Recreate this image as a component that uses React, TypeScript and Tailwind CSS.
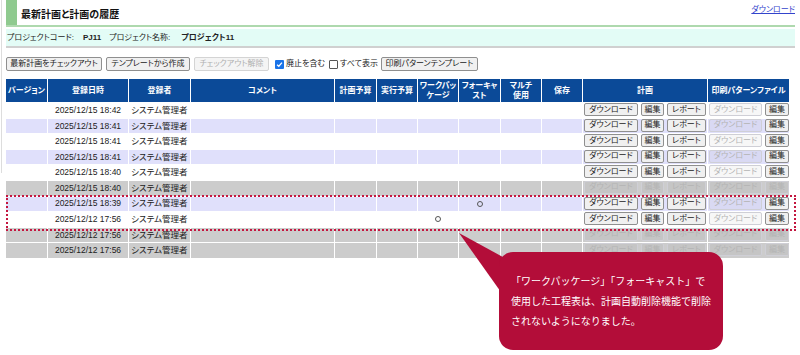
import React from "react";

type RowKind = "white" | "lav" | "gray";
interface Row {
  kind: RowKind;
  date: string;
  wp?: boolean;
  fc?: boolean;
}

const rows: Row[] = [
  { kind: "white", date: "2025/12/15 18:42" },
  { kind: "lav", date: "2025/12/15 18:41" },
  { kind: "white", date: "2025/12/15 18:41" },
  { kind: "lav", date: "2025/12/15 18:41" },
  { kind: "white", date: "2025/12/15 18:40" },
  { kind: "gray", date: "2025/12/15 18:40" },
  { kind: "lav", date: "2025/12/15 18:39", fc: true },
  { kind: "white", date: "2025/12/12 17:56", wp: true },
  { kind: "gray", date: "2025/12/12 17:56" },
  { kind: "gray", date: "2025/12/12 17:56" },
];

const cols =
  "grid grid-cols-[41px_80px_61px_143px_41px_40px_40px_41px_40px_40px_124px_81px] gap-x-[1px]";

function Btn({
  label,
  w,
  disabled,
}: {
  label: string;
  w: string;
  disabled?: boolean;
}) {
  return (
    <span
      className={
        "inline-flex items-center justify-center h-[13px] rounded-[2px] border text-[8px] leading-none " +
        w +
        (disabled
          ? " border-[#cfcfd6] bg-[rgba(0,0,0,0.03)] text-[#b4b4b4]"
          : " border-[#8f8f8f] bg-[#f0f0f0] text-[#222]")
      }
    >
      {label}
    </span>
  );
}

function TopBtn({
  label,
  w,
  disabled,
}: {
  label: string;
  w: string;
  disabled?: boolean;
}) {
  return (
    <span
      className={
        "inline-flex items-center justify-center h-[14px] rounded-[2px] border text-[8px] leading-none " +
        w +
        (disabled
          ? " border-[#d4d4d4] bg-[#f4f4f4] text-[#b0b0b0]"
          : " border-[#8f8f8f] bg-[#f0f0f0] text-[#222]")
      }
    >
      {label}
    </span>
  );
}

function Header() {
  const h = "bg-[#0b4a98] text-white font-bold text-[8px] leading-[10px] flex items-center justify-center text-center h-[23px]";
  return (
    <div className={cols}>
      <div className={h}>バージョン</div>
      <div className={h}>登録日時</div>
      <div className={h}>登録者</div>
      <div className={h}>コメント</div>
      <div className={h}>計画予算</div>
      <div className={h}>実行予算</div>
      <div className={h}>
        ワークパッ
        <br />
        ケージ
      </div>
      <div className={h}>
        フォーキャ
        <br />
        スト
      </div>
      <div className={h}>
        マルチ
        <br />
        使用
      </div>
      <div className={h}>保存</div>
      <div className={h}>計画</div>
      <div className={h}>印刷パターンファイル</div>
    </div>
  );
}

function Circle() {
  return (
    <span className="inline-block w-[6px] h-[6px] rounded-full border border-[#555]" />
  );
}

function BodyRow({ r }: { r: Row }) {
  const bg =
    r.kind === "white"
      ? "bg-white"
      : r.kind === "lav"
      ? "bg-[#e0e0fb]"
      : "bg-[#cccccc]";
  const c = "h-[14.6px] flex items-center text-[8.5px] text-[#222] " + bg;
  const dis = r.kind === "gray";
  return (
    <div className={cols + " mt-[1px]"}>
      <div className={c}></div>
      <div className={c + " justify-center"}>{r.date}</div>
      <div className={c + " pl-[2px]"}>システム管理者</div>
      <div className={c}></div>
      <div className={c}></div>
      <div className={c}></div>
      <div className={c + " justify-center"}>{r.wp ? <Circle /> : null}</div>
      <div className={c + " justify-center"}>{r.fc ? <Circle /> : null}</div>
      <div className={c}></div>
      <div className={c}></div>
      <div className={c + " items-start gap-[3px] pl-[1px]"}>
        <Btn label="ダウンロード" w="w-[54px]" disabled={dis} />
        <Btn label="編集" w="w-[23px]" disabled={dis} />
        <Btn label="レポート" w="w-[39px]" disabled={dis} />
      </div>
      <div className={c + " items-start gap-[3px] pl-[1px]"}>
        <Btn label="ダウンロード" w="w-[53px]" disabled />
        <Btn label="編集" w="w-[24px]" disabled={dis} />
      </div>
    </div>
  );
}

export default function App() {
  return (
    <div className="relative w-[800px] h-[355px] overflow-hidden bg-white text-[#222] font-['Liberation_Sans','Noto_Sans_CJK_JP',sans-serif] [font-feature-settings:'palt']">
      <div className="absolute left-[1px] top-0 w-[1px] h-[173px] bg-[#dddddd]" />
      <div className="pl-[6px] pr-[5px]">
        {/* title */}
        <div className="flex items-stretch h-[27px] border-b-2 border-[#aed9ae]">
          <div className="w-[11px] bg-[#8fca8f]" />
          <div className="flex-1 flex items-center pl-[4px] pt-[3px] text-[10px] font-bold text-[#111]">
            最新計画と計画の履歴
          </div>
          <a className="self-start mt-[4px] text-[8px] text-[#3344cc] underline">
            ダウンロード
          </a>
        </div>
        {/* info bar */}
        <div className="mt-[2px] h-[19px] bg-[#e3fcf6] border-b-2 border-[#d0d0d0] flex items-center pl-[1px] text-[8px] text-[#222]">
          <span>プロジェクトコード:</span>
          <span className="ml-[9px] font-bold">PJ11</span>
          <span className="ml-[8px]">プロジェクト名称:</span>
          <span className="ml-[11px] font-bold">プロジェクト11</span>
        </div>
        {/* buttons */}
        <div className="mt-[9px] flex items-center h-[14px] text-[8px]">
          <TopBtn label="最新計画をチェックアウト" w="w-[96px]" />
          <span className="w-[4px]" />
          <TopBtn label="テンプレートから作成" w="w-[84px]" />
          <span className="w-[4px]" />
          <TopBtn label="チェックアウト解除" w="w-[75px]" disabled />
          <span className="ml-[6px] w-[9px] h-[9px] rounded-[1px] bg-[#1a73e8] flex items-center justify-center">
            <svg width="7" height="7" viewBox="0 0 8 8">
              <path d="M1.2 4.2 L3.2 6 L6.8 1.8" stroke="white" strokeWidth="1.4" fill="none" />
            </svg>
          </span>
          <span className="ml-[2px]">廃止を含む</span>
          <span className="ml-[4px] w-[9px] h-[9px] rounded-[1px] border border-[#555] bg-white" />
          <span className="ml-[2px]">すべて表示</span>
          <span className="w-[3px]" />
          <TopBtn label="印刷パターンテンプレート" w="w-[97px]" />
        </div>
        {/* table */}
        <div className="mt-[8px]">
          <Header />
          {rows.map((r, i) => (
            <BodyRow key={i} r={r} />
          ))}
        </div>
      </div>

      {/* highlight box */}
      <div className="absolute left-[6px] top-[195px] w-[790px] h-[36px] border-2 border-dotted border-[#c4163f]" />

      {/* callout pointer */}
      <svg
        className="absolute left-0 top-0 pointer-events-none"
        width="800"
        height="355"
        viewBox="0 0 800 355"
      >
        <polygon points="459,233 512,262 508,302" fill="#b30d39" />
      </svg>
      {/* callout */}
      <div className="absolute left-[499px] top-[252px] w-[224px] h-[98px] rounded-[14px] bg-[#b30d39] text-white text-[10px] leading-[20px] pl-[12px] pt-[20px] [font-feature-settings:normal]">
        <div>「ワークパッケージ」「フォーキャスト」で</div>
        <div>使用した工程表は、計画自動削除機能で削除</div>
        <div>されないようになりました。</div>
      </div>
    </div>
  );
}
